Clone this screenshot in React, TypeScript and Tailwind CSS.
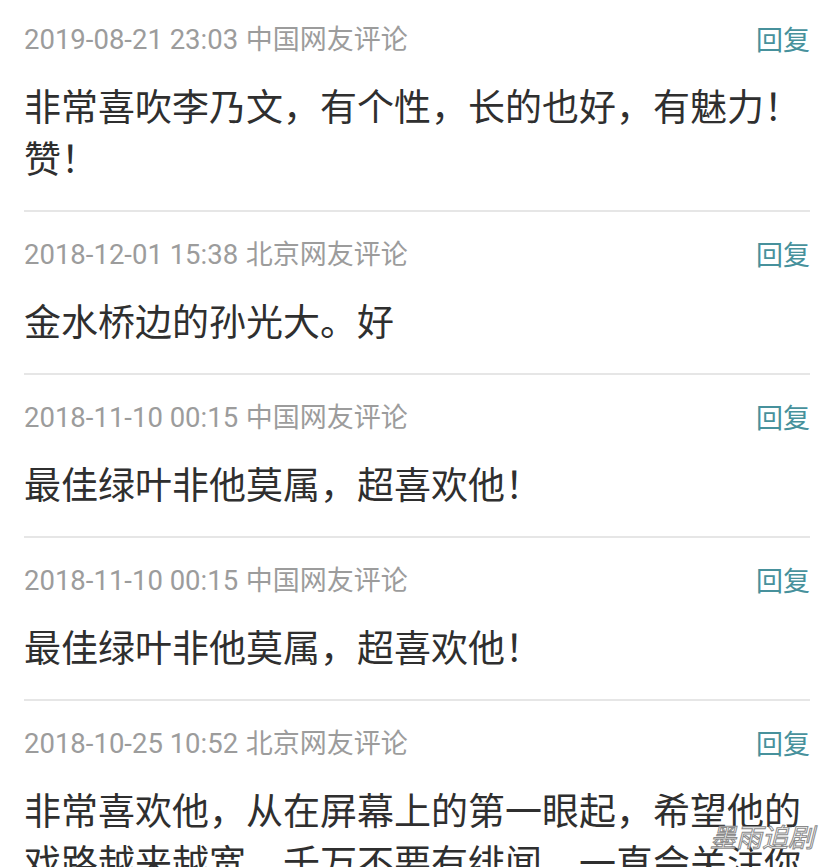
const comments = [
  {
    time: "2019-08-21 23:03",
    place: "中国网友评论",
    text: "非常喜吹李乃文，有个性，长的也好，有魅力！赞！",
  },
  { time: "2018-12-01 15:38", place: "北京网友评论", text: "金水桥边的孙光大。好" },
  { time: "2018-11-10 00:15", place: "中国网友评论", text: "最佳绿叶非他莫属，超喜欢他！" },
  { time: "2018-11-10 00:15", place: "中国网友评论", text: "最佳绿叶非他莫属，超喜欢他！" },
  {
    time: "2018-10-25 10:52",
    place: "北京网友评论",
    text: "非常喜欢他，从在屏幕上的第一眼起，希望他的戏路越来越宽，千万不要有绯闻，一直会关注你",
  },
];

export default function App() {
  return (
    <div className="relative h-[867px] w-[832px] overflow-hidden bg-white font-['Roboto','Noto_Sans_CJK_SC',sans-serif]">
      <div className="pl-[24px] pr-[22px]">
        {comments.map((c, i) => (
          <div
            key={i}
            className="border-b-2 border-[#e6e6e6] pt-[22px] pb-[27px] first:pt-[19px]"
          >
            <div className="flex h-[40px] items-center justify-between text-[27px] leading-[40px]">
              <span className="text-[#9c9c9c]">
                <span className="text-[27.5px]">{c.time}</span>{" "}
                <span className="ml-[1px] font-['Noto_Sans_CJK_SC',sans-serif]">{c.place}</span>
              </span>
              <span className="font-['Noto_Sans_CJK_SC',sans-serif] text-[#47919c]">回复</span>
            </div>
            <p className="mt-[20px] font-['Noto_Sans_CJK_SC',sans-serif] text-[37px] leading-[52px] text-[#2f2f2f]">
              {c.text}
            </p>
          </div>
        ))}
      </div>
      <div className="absolute left-[710px] top-[820px] font-['Noto_Sans_CJK_SC',sans-serif] text-[26px] leading-[32px] text-white [-webkit-text-stroke:1px_#8a8a8a] italic">
        墨雨追剧
      </div>
    </div>
  );
}
